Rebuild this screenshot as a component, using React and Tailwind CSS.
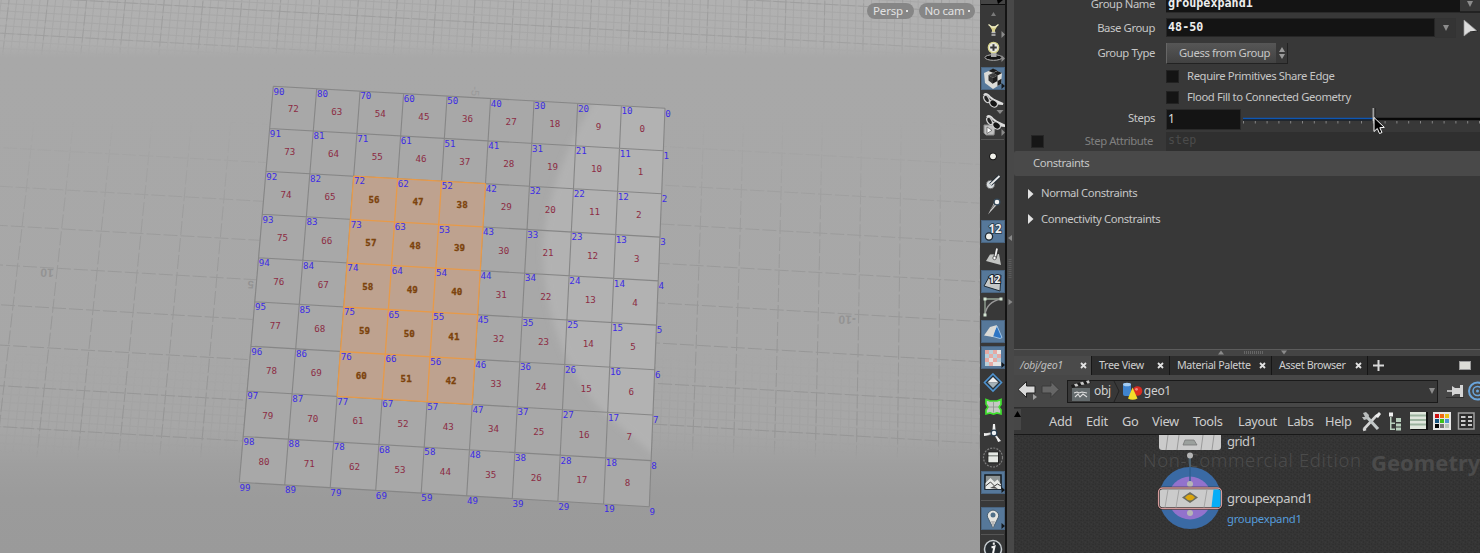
import React from "react";

/* ---------- perspective helper ---------- */
const TL = [273.3, 86.3];
const TR = [665, 108.3];
const BR = [649.3, 506.7];
const BL = [239.3, 482.3];

function makeProjector([x0, y0], [x1, y1], [x2, y2], [x3, y3]) {
  const dx1 = x1 - x2, dx2 = x3 - x2, dx3 = x0 - x1 + x2 - x3;
  const dy1 = y1 - y2, dy2 = y3 - y2, dy3 = y0 - y1 + y2 - y3;
  const den = dx1 * dy2 - dx2 * dy1;
  const g = (dx3 * dy2 - dx2 * dy3) / den;
  const h = (dx1 * dy3 - dx3 * dy1) / den;
  const a = x1 - x0 + g * x1, b = x3 - x0 + h * x3;
  const d = y1 - y0 + g * y1, e = y3 - y0 + h * y3;
  return (u, v) => {
    const w = g * u + h * v + 1;
    return [(a * u + b * v + x0) / w, (d * u + e * v + y0) / w];
  };
}
const P = makeProjector(TL, TR, BR, BL);
const pt = (u, v) => P(u, v).map((n) => n.toFixed(1)).join(" ");
const seg = (u1, v1, u2, v2) => `M${pt(u1, v1)}L${pt(u2, v2)}`;
const range = (a, b) => Array.from({ length: b - a + 1 }, (_, i) => a + i);

const coarse =
  range(-8, 20).map((k) => seg(k / 10, -0.4, k / 10, 1.1)).join("") +
  range(-3, 10).map((k) => seg(-0.8, k / 10, 2, k / 10)).join("");
const fine =
  range(-40, 100).map((k) => seg(k / 50, -0.4, k / 50, 1.1)).join("") +
  range(-20, 54).map((k) => seg(-0.8, k / 50, 2, k / 50)).join("");
const mesh = range(0, 9).map((k) => seg(k / 9, 0, k / 9, 1) + seg(0, k / 9, 1, k / 9)).join("");
const selMesh =
  range(2, 5).map((k) => seg(k / 9, 2 / 9, k / 9, 7 / 9)).join("") +
  range(2, 7).map((k) => seg(2 / 9, k / 9, 5 / 9, k / 9)).join("");
const quad = (u1, v1, u2, v2) => `M${pt(u1, v1)}L${pt(u2, v1)}L${pt(u2, v2)}L${pt(u1, v2)}Z`;

function Viewport() {
  const cells = range(0, 8).flatMap((c) => range(0, 8).map((r) => ({ c, r, n: c * 9 + r })));
  const points = range(0, 9).flatMap((c) => range(0, 9).map((r) => ({ c, r, n: c * 10 + r })));
  return (
    <svg width="980" height="553" className="block" fontFamily="'DejaVu Sans Mono', monospace" fontSize="9.2">
      <defs>
        <linearGradient id="bg" x1="0" y1="0" x2="0" y2="553" gradientUnits="userSpaceOnUse">
          <stop offset="0" stopColor="#b1b1b1" />
          <stop offset=".08" stopColor="#afafaf" />
          <stop offset=".105" stopColor="#a8a8a8" />
          <stop offset=".77" stopColor="#a7a7a7" />
          <stop offset=".84" stopColor="#9f9f9f" />
          <stop offset=".9" stopColor="#9b9b9b" />
          <stop offset="1" stopColor="#9a9a9a" />
        </linearGradient>
        <linearGradient id="fc" x1="0" y1="0" x2="0" y2="553" gradientUnits="userSpaceOnUse">
          <stop offset="0" stopColor="#fff" stopOpacity=".5" />
          <stop offset=".08" stopColor="#fff" stopOpacity=".4" />
          <stop offset=".1" stopColor="#fff" stopOpacity="0" />
          <stop offset=".22" stopColor="#fff" stopOpacity="0" />
          <stop offset=".4" stopColor="#fff" stopOpacity=".6" />
          <stop offset=".6" stopColor="#fff" stopOpacity=".9" />
          <stop offset=".79" stopColor="#fff" stopOpacity=".9" />
          <stop offset=".83" stopColor="#fff" stopOpacity="0" />
        </linearGradient>
        <linearGradient id="ff" x1="0" y1="0" x2="0" y2="553" gradientUnits="userSpaceOnUse">
          <stop offset="0" stopColor="#fff" stopOpacity=".6" />
          <stop offset=".07" stopColor="#fff" stopOpacity=".55" />
          <stop offset=".1" stopColor="#fff" stopOpacity="0" />
          <stop offset=".64" stopColor="#fff" stopOpacity="0" />
          <stop offset=".7" stopColor="#fff" stopOpacity=".25" />
          <stop offset=".76" stopColor="#fff" stopOpacity=".75" />
          <stop offset=".82" stopColor="#fff" stopOpacity="0" />
        </linearGradient>
        <mask id="mc"><rect width="980" height="553" fill="url(#fc)" /></mask>
        <mask id="mf"><rect width="980" height="553" fill="url(#ff)" /></mask>
        <clipPath id="gridClip"><path d={quad(0, 0, 1, 1)} /></clipPath>
        <filter id="soft"><feGaussianBlur stdDeviation="3" /></filter>
      </defs>
      <rect width="980" height="553" fill="url(#bg)" />
      <g mask="url(#mf)"><path d={fine} stroke="#9f9f9f" strokeWidth=".9" fill="none" /></g>
      <g mask="url(#mc)"><path d={coarse} stroke="#959595" strokeWidth="1" fill="none" strokeDasharray="14 3" /></g>
      <g fill="#939393" fontFamily="'Liberation Sans', sans-serif" fontSize="12" fontWeight="bold">
        <text transform="translate(54 269) rotate(183)">10</text>
        <text transform="translate(254 281) rotate(183)" fontSize="11">5</text>
        <text transform="translate(472 86) rotate(95)" fontSize="11" fill="#9a9a9a" fontWeight="normal">-5</text>
        <text transform="translate(856 316) rotate(182)" fontSize="12">-10</text>
      </g>
      <path d={quad(0, 0, 1, 1)} fill="#a8a8a8" />
      <g clipPath="url(#gridClip)">
        <path
          d="M600 92C578 125 545 190 543 250C544 325 573 385 610 418L665 464L720 300L690 80Z"
          fill="#b2b2b2"
          filter="url(#soft)"
        />
      </g>
      <path d={mesh} stroke="#868686" strokeWidth="1.1" fill="none" />
      <path d={quad(2 / 9, 2 / 9, 5 / 9, 7 / 9)} fill="#bea28f" />
      <path d={selMesh} stroke="#e89a48" strokeWidth="1.3" fill="none" />
      {cells.map(({ c, r, n }) => {
        const [x, y] = P(1 - (c + 0.5) / 9, (r + 0.5) / 9);
        const sel = c > 3 && c < 7 && r > 1 && r < 7;
        return (
          <text
            key={n}
            x={x}
            y={y + 3.9}
            textAnchor="middle"
            fill={sel ? "#7c430c" : "#8c2c44"}
            stroke={sel ? "#7c430c" : "none"}
            strokeWidth={sel ? 0.3 : 0}
            fontWeight={sel ? "bold" : "normal"}
          >
            {n}
          </text>
        );
      })}
      {points.map(({ c, r, n }) => {
        const [x, y] = P(1 - c / 9, r / 9);
        return (
          <text key={n} x={x + 0.2} y={y + 8.3} fill="#3c2ce4">
            {n}
          </text>
        );
      })}
    </svg>
  );
}

/* ---------- display toolbar ---------- */
const RArrow = () => <path d="M20.5 14v7l3.500-3.500z" fill="#8b8b8b" />;
const Corner = () => <path d="M20.5 16v6l3.500-3z" fill="#15181b" />;
const Glasses = () => (
  <g>
    <path d="M3 4c1-2 4-1 6 2l4 3 9 4-6-.5" fill="none" stroke="#dedede" strokeWidth="2" />
    <ellipse cx="5.500" cy="8" rx="2.300" ry="4" transform="rotate(-30 5.500 8)" fill="#242424" stroke="#cfcfcf" strokeWidth="1.200" />
    <ellipse cx="12.500" cy="12.500" rx="4.200" ry="3.200" transform="rotate(35 12.500 12.500)" fill="#151515" stroke="#d6d6d6" strokeWidth="1.200" />
  </g>
);
const Twelve = () => (
  <text x="7.500" y="12.500" fontFamily="'Noto Sans', sans-serif" fontWeight="bold" fontSize="11.500" fill="#ececec" stroke="#223443" strokeWidth="1.600" paintOrder="stroke">12</text>
);

const TOOLS = [
  { gap: "mt-[-2px]", icon: <g><path d="M8 7l3 5v3h3v-3l3-5-2.500 1.500h-4z" fill="#d8d08a" /><path d="M7.500 6.500l3.500 2.500h3l3.500-2.500" fill="none" stroke="#efedc4" strokeWidth="1.300" /><path d="M10.500 14.500h4M10.500 17h4" stroke="#bdbdbd" strokeWidth="1.400" /><path d="M20.500 13v7l3.500-3.500z" fill="#8b8b8b" /></g> },
  { gap: "mt-0", icon: <g><ellipse cx="12.500" cy="16.500" rx="8.500" ry="2.800" fill="#141414" stroke="#b0b0b0" /><path d="M10 11h5.500v5H10z" fill="#aaa" /><circle cx="12.500" cy="6.500" r="5.200" fill="#e9e9e4" stroke="#d8d58e" strokeWidth="1.300" /><path d="M12.500 3.200v6.600M9.200 6.500h6.600" stroke="#3a3a3a" strokeWidth="2" /><path d="M20.500 14v7l3.500-3.500z" fill="#8b8b8b" /></g> },
  { gap: "mt-[3px]", on: true, icon: <g><path d="M12 2l9 4-1 11-8 5-8-6-1-10z" fill="#dcdcd8" /><path d="M12 1.500l4.500 2-4.500 2.300L7.500 4zM12 11l4.500-2.500v5.500L12 16.500zM16.500 8.500L21 6l-4.500-2L12 6zM16.500 14l4-2.200-.5 5.200-3.500 2z" fill="#1d1d1d" /><path d="M7.500 8l4.500 3v6l-4.500-3.500z" fill="#333" /><path d="M12 6l4.500 2.500L12 11 7.500 8z" fill="#3d3d3d" /><Corner /></g> },
  { gap: "mt-[1px]", icon: <g><Glasses /><path d="M15.500 19h7L19 23z" fill="#8b8b8b" /></g> },
  { gap: "mt-[1px]", icon: <g><path d="M3 10h9l2 3-1 7H5l-2-2z" fill="#bfbfbf" stroke="#8a8a8a" /><g transform="translate(3 -2)"><Glasses /></g><path d="M6 12v6.500l5-3.200z" fill="#fff" stroke="#555" strokeWidth=".7" /><RArrow /></g> },
  { sep: "mt-px mb-[5px]" },
  { gap: "mt-0", icon: <g><circle cx="12" cy="11.500" r="3.700" fill="#111" /><circle cx="12" cy="11.300" r="2.900" fill="#f0f0ea" /></g> },
  { gap: "mt-[2px]", icon: <g><circle cx="9.500" cy="14.500" r="4.200" fill="#d6dadc" stroke="#666" /><path d="M9.500 14.500L18.500 6" stroke="#1c2a35" strokeWidth="3.600" /><path d="M9.500 14.500L18.500 6" stroke="#e8e8e8" strokeWidth="1.800" /></g> },
  { gap: "mt-[2px]", icon: <g><path d="M7 19.500L14 6l3 2.500z" fill="#c8c8c8" /><path d="M9 15l6-7" stroke="#666" /><circle cx="16" cy="7" r="2.900" fill="#f2f2f2" stroke="#34495a" strokeWidth="1.200" /></g> },
  { gap: "mt-[2px]", on: true, icon: <g><Twelve /><circle cx="8" cy="16.500" r="3.600" fill="#f0f0ea" stroke="#1d2730" strokeWidth="1.300" /></g> },
  { gap: "mt-[2px]", icon: <g><path d="M9 9.500l9-.5 2 11-15-4z" fill="#c2c4c2" /><path d="M14 13l2-9.500" stroke="#333" strokeWidth="3.600" /><path d="M14 13l2-9.500" stroke="#f2f2f2" strokeWidth="1.800" /><circle cx="13.500" cy="13" r="1.700" fill="#fff" stroke="#666" /></g> },
  { gap: "mt-[2px]", on: true, icon: <g><path d="M8 7l12-2-1 16-16-5z" fill="#c5c8c8" stroke="#1f2c36" /><text x="7.500" y="13" fontFamily="'Noto Sans', sans-serif" fontWeight="bold" fontSize="10.500" fill="#f2f2f2" stroke="#1b2630" strokeWidth="2" paintOrder="stroke">12</text></g> },
  { gap: "mt-[2px]", icon: <g fill="none"><path d="M4 20V4h16" stroke="#98a898" strokeWidth="1.300" /><path d="M4 20C5 11 10 6 20 4" stroke="#999" strokeWidth="1.300" /><path d="M2.500 2.500h3v3h-3zM18.500 2.500h3v3h-3zM2.500 18.500h3v3h-3z" fill="#d3e5d3" /></g> },
  { gap: "mt-[2px]", on: true, icon: <g><path d="M10 16l6-10 5 11.500-2 1z" fill="#2f76c4" stroke="#b4d6f4" strokeWidth=".8" /><path d="M3 15.500L9 7l7-2-4 12z" fill="#dadad6" /></g> },
  { gap: "mt-[3px]", on: true, icon: <g><path d="M4 4h16v16H4z" fill="#e4e4e2" /><path d="M4 4h4v4H4zM12 4h4v4h-4zM8 8h4v4H8zM16 8h4v4h-4zM4 12h4v4H4zM12 12h4v4h-4zM8 16h4v4H8z" fill="#e5aaa4" /><path d="M8 4h4v4H8zM4 8h4v4H4zM12 8h4v4h-4zM16 12h4v4h-4zM4 16h4v4H4z" fill="#b9d0da" /><Corner /></g> },
  { gap: "mt-[2px]", icon: <g><path d="M12 3l8.500 8.500L12 20l-8.500-8.500z" fill="#26323c" stroke="#4f93cf" strokeWidth="1.600" /><path d="M6.500 11.500L12 6l5.500 5.500z" fill="#eee" /><path d="M6.500 11.500L12 17l5.500-5.500z" fill="#a5b2b8" /></g> },
  { gap: "mt-[1px]", icon: <g><path d="M5 4.500l4 1.500h7l4-1.500v5L18 12l2 3v4l-4-1-3.500 1L9 18l-4 1v-4l2-3-2-3z" fill="#c3c9c3" stroke="#3fe02d" strokeWidth="1.700" /><path d="M12.500 6.500v11M7.500 12h10" stroke="#8d938d" strokeWidth=".8" /></g> },
  { gap: "mt-[3px]", icon: <g><path d="M13 12V3M13 12l-10 1.500M13 12l5 8" stroke="#dcdcdc" strokeWidth="1.800" /><path d="M12 3h2l.5 6h-3zM3 12v3l6-1zM17 21l3-1-5-6z" fill="#f0f0f0" /><circle cx="13" cy="12" r="2.900" fill="#edf1f4" stroke="#273b4c" strokeWidth="1.300" /></g> },
  { gap: "mt-[2px]", icon: <g><circle cx="12" cy="11.500" r="9.500" fill="none" stroke="#7d7d7d" strokeWidth="1.200" strokeDasharray="2 1.200" /><path d="M7 6h10.500v11H7z" fill="#8d938d" stroke="#222" /><path d="M7.500 6.500H17V9H7.500zM7.500 10.500H17v5.500H7.500z" fill="#e5e8e4" /></g> },
  { gap: "mt-[2px]", on: true, icon: <g><path d="M4 4h16v14H4z" fill="#8e9494" stroke="#15191d" strokeWidth="1.500" /><path d="M4.500 12l5-5 4 4 3-2.500 3.500 5V18h-15.500z" fill="#e7e9e7" /><path d="M4.500 15l5-4 4 4 3-2 3.500 2" stroke="#3b3b3b" fill="none" /><path d="M9 17l4-2 4 3z" fill="#4d4d4d" /><Corner /></g> },
  { sep: "mt-[6px] mb-[6px]" },
  { gap: "mt-0", on: true, icon: <g><path d="M12 21l-4.500-9a5.500 5.500 0 1 1 9 0z" fill="#e4e4e0" stroke="#465d70" /><circle cx="12" cy="8" r="2.500" fill="#4f6f88" /><path d="M12 21l-2-7h4z" fill="#b7b7b7" /><Corner /></g> },
  { sep: "mt-[4px] mb-[2px]" },
  { gap: "mt-0", icon: <g><circle cx="12" cy="12" r="8.500" fill="#252b30" stroke="#c6ccd0" strokeWidth="1.500" /><path d="M10.500 10.500l3-1-1.500 7M12.800 5.500v2.200" stroke="#f1f1f1" strokeWidth="2" fill="none" /></g> },
];

function Toolbar() {
  return (
    <div className="flex w-[27px] shrink-0 flex-col overflow-hidden border-r-2 border-[#141414] bg-[#383838] pl-[1px]">
      <div className="flex h-[5px] shrink-0 justify-end border-b border-[#0e0e0e] bg-[#444]">
        <svg width="8" height="4"><path d="M0 0h6L1 4z" fill="#000" /></svg>
      </div>
      <svg width="24" height="15" className="shrink-0"><path d="M10 11h5l-2.500-4z" fill="#7a7a7a" /></svg>
      {TOOLS.map((t, i) =>
        t.sep ? (
          <div key={i} className={`h-px w-[23px] shrink-0 bg-[#555] ${t.sep}`} />
        ) : (
          <div key={i} className={`h-[23px] w-[24px] shrink-0 ${t.gap} ${t.on ? "bg-[#56789a] ring-1 ring-inset ring-[#496480]" : ""}`}>
            <svg width="24" height="23" viewBox="0 0 24 23" className="overflow-visible">{t.icon}</svg>
          </div>
        )
      )}
    </div>
  );
}

/* ---------- parameter panel ---------- */
const Label = ({ children, dim }) => (
  <div className={`w-[141px] shrink-0 text-right ${dim ? "text-[#808080]" : ""}`}>{children}</div>
);
const Down = ({ className = "" }) => (
  <svg width="6" height="6" className={className}><path d="M0 0h6L3 6z" fill="#8c8c8c" /></svg>
);

function Check({ label }) {
  return (
    <div className="flex items-center pl-[152px]">
      <div className="h-[13px] w-[13px] border border-[#222] bg-[#141414]" />
      <span className="ml-[8px]">{label}</span>
    </div>
  );
}

function Params() {
  return (
    <div className="flex h-[349px] shrink-0 flex-col overflow-hidden bg-[#383838] font-['Noto_Sans',sans-serif] text-[11.3px] tracking-[-0.4px] text-[#c6c6c6]">
      <div className="flex h-[13px] shrink-0 items-end">
        <div className="flex h-[19px] items-center pt-[1px]"><Label>Group Name</Label></div>
        <div className="ml-[11px] flex h-[19px] w-[294px] items-center border-b border-[#2a2a2a] bg-[#141414] pt-[2px] pl-[2px] font-['DejaVu_Sans_Mono',monospace] text-[11.7px] font-bold tracking-[0.03px] text-[#ededed]">groupexpand1</div>
        <div className="flex h-[13px] w-[20px] justify-center border-b-2 border-[#222] pt-[1px]"><Down /></div>
      </div>
      <div className="flex h-[29px] shrink-0 items-center">
        <div className="pt-[1px]"><Label>Base Group</Label></div>
        <div className="ml-[11px] flex h-[19px] w-[270px] items-center border border-[#262626] bg-[#141414] pt-[1px] pl-[1px] font-['DejaVu_Sans_Mono',monospace] text-[11.7px] font-bold tracking-[0.03px] text-[#ededed]">48-50</div>
        <div className="flex h-[20px] w-[21px] items-center justify-center border border-[#333] bg-[#343434]"><Down /></div>
        <svg width="18" height="20" className="ml-[6px]"><path d="M2 2v16l5-4 8-1z" fill="#dcdcdc" stroke="#999" strokeWidth=".7" /><path d="M8 14l8-1" stroke="#222" /></svg>
      </div>
      <div className="flex h-[22px] shrink-0 items-center">
        <Label>Group Type</Label>
        <div className="ml-[11px] flex h-[21px] w-[110px] items-center border-b border-l border-b-[#222] border-l-[#666] bg-linear-to-b from-[#565656] to-[#424242] pt-[1px] pl-[12px]">Guess from Group</div>
        <div className="flex h-[21px] w-[12px] items-center justify-center border-r border-b border-[#222]">
          <svg width="6" height="12"><path d="M0 5h6L3 0zM0 7h6l-3 5z" fill="#9a9a9a" /></svg>
        </div>
      </div>
      <div className="mt-[2px] flex h-[21px] shrink-0 items-center"><Check label="Require Primitives Share Edge" /></div>
      <div className="flex h-[20px] shrink-0 items-center"><Check label="Flood Fill to Connected Geometry" /></div>
      <div className="flex h-[24px] shrink-0 items-center">
        <div className="pb-[1px]"><Label>Steps</Label></div>
        <div className="ml-[11px] flex h-[21px] w-[75px] items-center border border-[#2a2a2a] bg-[#141414] pl-[1px] text-[12px] text-[#ddd]">1</div>
        <div className="relative z-10 h-[24px] w-[239px]">
          <svg width="239" height="32" className="block overflow-visible">
            <path d="M2 11.500h131" stroke="#0d56b4" strokeWidth="1.500" />
            <path d="M2 13h131" stroke="#0b1725" />
            <path d="M133 12h106" stroke="#080808" strokeWidth="2.500" />
            {range(0, 20).map((k) => (
              <path key={k} d={`M${2.5 + k * 11.8} 14v2.5`} stroke="#858585" />
            ))}
            <path d="M132.500 1v13" stroke="#a2a2a2" strokeWidth="2" />
            <path d="M134 1v11" stroke="#1d1d1d" />
            <path d="M133 10.500v14l3.300-3 2.200 5 2.500-1-2.200-4.800 4.500-.3z" fill="#000" stroke="#fff" strokeWidth="1" />
          </svg>
        </div>
      </div>
      <div className="flex h-[20px] shrink-0 items-center">
        <div className="ml-[17px] h-[13px] w-[13px] border border-[#262626] bg-[#161616]" />
        <div className="w-[109px] shrink-0 pl-[11px] text-right text-[#808080]">Step Attribute</div>
        <div className="ml-[13px] flex h-[19px] flex-1 items-center bg-[#2f2f2f] pl-[2px] font-['DejaVu_Sans_Mono',monospace] text-[11.7px] tracking-[0.03px] text-[#4b4b4b]">step</div>
      </div>
      <div className="flex h-[25px] shrink-0 items-center rounded-l-[2px] bg-[#494949] pl-[19px]">Constraints</div>
      <div className="mt-[5px] flex h-[25px] shrink-0 items-center pl-[14px]">
        <svg width="6" height="10"><path d="M0 0v10l5.500-5z" fill="#e2e2e2" /></svg>
        <span className="ml-[7px]">Normal Constraints</span>
      </div>
      <div className="flex h-[26px] shrink-0 items-center pl-[14px]">
        <svg width="6" height="10"><path d="M0 0v10l5.500-5z" fill="#e2e2e2" /></svg>
        <span className="ml-[7px]">Connectivity Constraints</span>
      </div>
    </div>
  );
}

/* ---------- network pane ---------- */
const Close = () => (
  <svg width="7" height="7"><path d="M1 1l5 5M6 1l-5 5" stroke="#e2e2e2" strokeWidth="1.800" /></svg>
);

function Tabs() {
  const tab = "flex h-full shrink-0 items-center justify-between border-r border-[#161616] bg-[#2d2d2d] pl-[6px] pr-[5px]";
  return (
    <div className="flex h-[19px] shrink-0 items-stretch bg-[#2a2a2a] text-[10.7px] tracking-[-0.35px] text-[#cfcfcf]">
      <div className="flex w-[78px] shrink-0 items-center justify-between border-r border-[#161616] bg-[#4a4a4a] pr-[4px] pl-[6px] italic text-[#bdbdbd]">/obj/geo1<Close /></div>
      <div className={`${tab} w-[78px] pl-[7px]`}>Tree View<Close /></div>
      <div className={`${tab} w-[102px] pl-[7px]`}>Material Palette<Close /></div>
      <div className={`${tab} w-[96px] pl-[7px]`}>Asset Browser<Close /></div>
      <div className="flex flex-1 items-center justify-between pr-[9px] pl-[5px]">
        <svg width="11" height="11"><path d="M5.500 0v11M0 5.500h11" stroke="#d8d8d8" strokeWidth="2" /></svg>
        <svg width="12" height="9"><rect x=".5" y=".5" width="11" height="8" fill="#dcdcd6" stroke="#9a9a9a" /></svg>
      </div>
    </div>
  );
}

function PathBar() {
  return (
    <div className="flex h-[33px] shrink-0 items-center border-b border-[#2d2d2d] bg-[#474747] text-[12px] tracking-[-0.3px] text-[#d0d0d0]">
      <svg width="53" height="28" className="shrink-0">
        <path d="M4 12.500l8.500-8v4.500H21v7h-8.500v4.500z" fill="#d8d8d8" stroke="#222" />
        <path d="M45 12.500l-8-8v4.500h-9v7h9v4.500z" fill="#666" stroke="#3b3b3b" />
        <path d="M19 17v6l4-3z" fill="#a0a0a0" />
      </svg>
      <div className="flex h-[23px] w-[371px] shrink-0 items-center border border-[#1a1a1a] bg-[#383838] pl-[3px]">
        <svg width="21" height="22">
          <path d="M0 5l19-5 .7 3L1 8z" fill="#1b1b1b" />
          <path d="M3 4.200l3-.8 1.500 2.600-3 .7zM9 2.600l3-.8 1.500 2.600-3 .7zM15 1l3-.8.8 2.700-2.300.8z" fill="#c9c9c9" />
          <path d="M1 8h18v13H1z" fill="#646b6d" />
          <path d="M3 13l3-1 2 1 3-1 5 1M4 17l3-3 2 3 3-3 4 3" stroke="#dedede" strokeWidth="1.100" fill="none" />
        </svg>
        <span className="ml-[2px]">obj</span>
        <svg width="8" height="21" className="ml-[2px]"><path d="M1 0l5 10-5 11" stroke="#222" fill="none" /></svg>
        <svg width="21" height="19" className="ml-[1px]">
          <rect x="1" y="1" width="8" height="13" rx="2" fill="#3f84cf" />
          <ellipse cx="5" cy="2.500" rx="4" ry="1.800" fill="#a5cdf3" />
          <circle cx="15.500" cy="9" r="4.800" fill="#d92c22" />
          <circle cx="14.500" cy="7.300" r="1.400" fill="#f18a80" />
          <path d="M10.500 5.500l5 11q-5 2.500-9.500 0z" fill="#f2dc2b" />
        </svg>
        <span className="ml-px">geo1</span>
        <Down className="mr-[2px] ml-auto" />
      </div>
      <svg width="42" height="26" className="shrink-0">
        <path d="M9 13h7" stroke="#ddd" strokeWidth="1.500" />
        <path d="M14 8l3 2h5V7h3v12h-3v-3h-5l-3 2z" fill="#d5d5d5" />
        <path d="M8 19.500h18" stroke="#2e2e2e" />
        <g fill="none" stroke="#6aa5dc"><circle cx="39.500" cy="13" r="8.500" strokeWidth="2" /><circle cx="39.500" cy="13" r="4.500" strokeWidth="1.500" /></g>
        <circle cx="39.500" cy="13" r="1.500" fill="#6aa5dc" />
      </svg>
    </div>
  );
}

function MenuBar() {
  return (
    <div className="flex h-[27px] shrink-0 items-stretch border-b border-[#181818] bg-[#373737] text-[12.8px] tracking-[-0.3px] text-[#cdcdcd]">
      <div className="mt-[1px] flex h-[21px] w-[9px] justify-center bg-[#474747] pt-[2px]">
        <svg width="7" height="6"><path d="M0 6h7L3.500 0z" fill="#000" /></svg>
      </div>
      <div className="ml-[28px] flex items-center pt-[1px]">
        <span className="w-[37px]">Add</span>
        <span className="w-[36px]">Edit</span>
        <span className="w-[30px]">Go</span>
        <span className="w-[41px]">View</span>
        <span className="w-[45px]">Tools</span>
        <span className="w-[49px]">Layout</span>
        <span className="w-[38px]">Labs</span>
        <span className="w-[33px]">Help</span>
      </div>
      <svg width="122" height="26" className="shrink-0">
        <g transform="translate(3 3)">
          <path d="M3 18L15 5l2-1M2 19l3-1" stroke="#d5d5d5" strokeWidth="2.600" fill="none" />
          <path d="M6 6l11 12" stroke="#c2c8c8" strokeWidth="3.200" />
          <path d="M2 2l3-1 3 3-1 4-4 1-2-3h3z" fill="#b9bdbd" />
          <path d="M14 5l4-4 2 2-3 4z" fill="#eee" />
        </g>
        <g fill="#b9cfbd"><path d="M31 4.500h4v4h-4z" fill="#f0f0f0" /><path d="M32 9h1.500v13H32zM33 14.500h4V16h-4zM33 20.500h4V22h-4z" /><path d="M38 10h5v4h-5zM38 15.500h5v3h-5zM38 19.500h5v3h-5z" /></g>
        <path d="M53 4h17v18H53z" fill="#111" /><path d="M52 4h16v17H52z" fill="#dfe6dc" /><path d="M52 7.500h16M52 12h16M52 16.500h16" stroke="#9cb39f" strokeWidth="2" />
        <path d="M75 4h18v18H75z" fill="#e6e6e6" />
        <path d="M77 6h4v4h-4z" fill="#cc1010" /><path d="M82 6h4v4h-4z" fill="#f06a10" /><path d="M87 6h4v4h-4z" fill="#e8c318" />
        <path d="M77 11h4v4h-4z" fill="#16527c" /><path d="M82 11h4v4h-4z" fill="#3cc21a" /><path d="M87 11h4v4h-4z" fill="#4e93d0" />
        <path d="M77 16h4v4h-4z" fill="#050505" /><path d="M82 16h4v4h-4z" fill="#777" /><path d="M87 16h4v4h-4z" fill="#b7c4b7" />
        <rect x="100.500" y="5" width="15.500" height="16" fill="#2a2a2a" stroke="#a0a0a0" strokeWidth="1.500" />
        <path d="M103 9h4.500M110 9h4M103 13h4.500M110 13h4M103 17h4.500M110 17h4" stroke="#c9c9c9" strokeWidth="2" />
      </svg>
    </div>
  );
}

function Network() {
  return (
    <svg width="466" height="118" className="block shrink-0" fontFamily="'Noto Sans', sans-serif">
      <defs>
        <pattern id="tex" width="6" height="6" patternUnits="userSpaceOnUse">
          <rect width="6" height="6" fill="#353535" />
          <path d="M0 1h2v1H0zM3 0h1v2H3zM4 3h2v1H4zM1 4h1v2H1z" fill="#303030" />
          <path d="M2 3h1v1H2zM5 5h1v1H5z" fill="#3a3a3a" />
        </pattern>
      </defs>
      <rect width="466" height="118" fill="url(#tex)" />
      <text x="129" y="31.500" fontSize="18.500" fontWeight="300" fill="#4b4b4b" textLength="218">Non-Commercial Edition</text>
      <text x="357" y="36" fontSize="22" fontWeight="bold" fill="#4b4b4b">Geometry</text>
      <path d="M145 -8h62v20q0 3-3 3h-56q-3 0-3-3z" fill="#cbcbcb" />
      <path d="M154 0l-2 15M165 0l-2 15M189 0l-2 15M200 0l-2 15" stroke="#999" />
      <path d="M169 10l2-5h9l3 5z" fill="#9ba09d" stroke="#777" strokeWidth=".8" />
      <path d="M176 22v22" stroke="#4c687c" strokeWidth="1.500" />
      <circle cx="176" cy="20.500" r="3" fill="#b5b5b5" />
      <circle cx="176" cy="63" r="31" fill="#3a6aa4" />
      <circle cx="176" cy="63" r="21.500" fill="#9272cc" />
      <path d="M176 32v14" stroke="#2f5f92" strokeWidth="1.500" />
      <circle cx="176" cy="49" r="3" fill="#b5b5b5" />
      <circle cx="176" cy="78" r="3" fill="#b5b5b5" />
      <rect x="144.500" y="53" width="63" height="20.500" rx="4" fill="#cbcbcb" stroke="#222" strokeWidth="2.500" />
      <rect x="144.500" y="53" width="63" height="20.500" rx="4" fill="none" stroke="#d59a9a" strokeWidth="1.300" />
      <path d="M199.500 54.500h5q2 0 2 2v13q0 2.500-2 2.500h-7z" fill="#06adf7" />
      <path d="M154 54.500l-3 18M165 54.500l-3 18M193 54.500l-3 18" stroke="#a4a4a4" />
      <path d="M168 62.500l8-5.500 8 5.500-8 5.500z" fill="#6d6d60" />
      <path d="M171 62.500q5-6 10 0-5 6-10 0z" fill="#dca60c" />
      <text x="213" y="10.500" fontSize="13" fill="#c9c9c9" textLength="30">grid1</text>
      <text x="213" y="67.500" fontSize="13" fill="#c9c9c9" textLength="86">groupexpand1</text>
      <text x="213" y="88" fontSize="11.300" fill="#569cdb" textLength="75">groupexpand1</text>
    </svg>
  );
}

export default function App() {
  return (
    <div className="flex h-[553px] w-[1480px] overflow-hidden bg-[#383838]">
      <div className="relative w-[980px] shrink-0">
        <Viewport />
        <div className="absolute top-[3px] right-[5px] flex gap-[5px] font-['Noto_Sans',sans-serif] text-[11.5px] leading-none tracking-[-0.2px] text-[#e2e2e2]">
          <div className="flex h-[16px] w-[47px] items-center justify-center rounded-full bg-[#868686]">Persp<span className="ml-[3px] h-[2px] w-[2px] bg-[#e2e2e2]" /></div>
          <div className="flex h-[16px] w-[56px] items-center justify-center rounded-full bg-[#868686]">No cam<span className="ml-[3px] h-[2px] w-[2px] bg-[#e2e2e2]" /></div>
        </div>
      </div>
      <Toolbar />
      <div className="flex w-[7px] shrink-0 flex-col bg-[#484848]">
        <svg width="7" height="553"><path d="M5 235v6l-4-3z" fill="#888" /><path d="M1.500 299v6l4-3z" fill="#888" /><path d="M3 259v20" stroke="#5b5b5b" strokeWidth="3" strokeDasharray="1 1" /></svg>
      </div>
      <div className="flex flex-1 flex-col overflow-hidden font-['Noto_Sans',sans-serif]">
        <Params />
        <div className="flex h-[7px] shrink-0 items-center border-t border-[#5c5c5c] bg-[#444]">
          <svg width="90" height="6" className="ml-[204px]"><path d="M0 4.500h6l-3-4zM63 .5h6l-3 4z" fill="#8a8a8a" /><path d="M26 2.500h20" stroke="#666" strokeWidth="3" strokeDasharray="1 1" /></svg>
        </div>
        <Tabs />
        <PathBar />
        <MenuBar />
        <Network />
      </div>
    </div>
  );
}
